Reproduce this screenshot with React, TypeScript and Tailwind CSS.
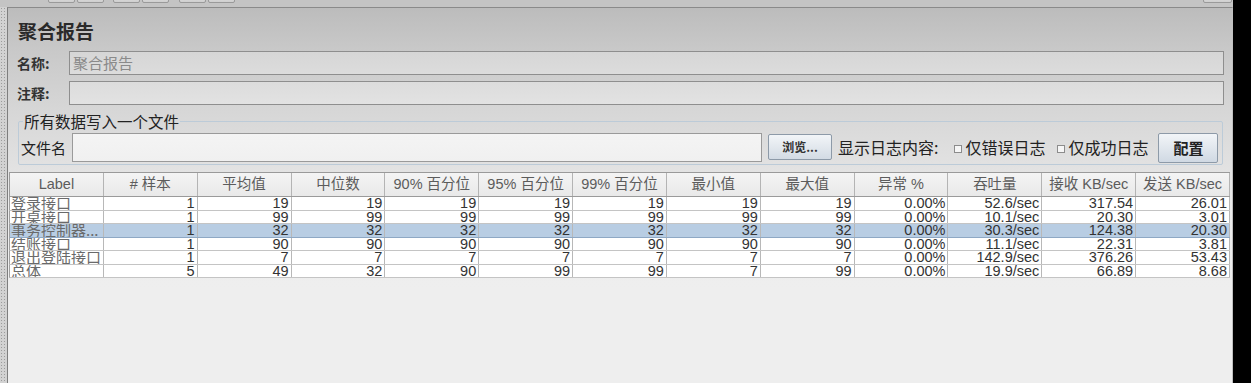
import React from "react";

const cols = [
  "Label",
  "# 样本",
  "平均值",
  "中位数",
  "90% 百分位",
  "95% 百分位",
  "99% 百分位",
  "最小值",
  "最大值",
  "异常 %",
  "吞吐量",
  "接收 KB/sec",
  "发送 KB/sec",
];

const rows: string[][] = [
  ["登录接口", "1", "19", "19", "19", "19", "19", "19", "19", "0.00%", "52.6/sec", "317.54", "26.01"],
  ["开桌接口", "1", "99", "99", "99", "99", "99", "99", "99", "0.00%", "10.1/sec", "20.30", "3.01"],
  ["事务控制器...", "1", "32", "32", "32", "32", "32", "32", "32", "0.00%", "30.3/sec", "124.38", "20.30"],
  ["结账接口", "1", "90", "90", "90", "90", "90", "90", "90", "0.00%", "11.1/sec", "22.31", "3.81"],
  ["退出登陆接口", "1", "7", "7", "7", "7", "7", "7", "7", "0.00%", "142.9/sec", "376.26", "53.43"],
  ["总体", "5", "49", "32", "90", "99", "99", "7", "99", "0.00%", "19.9/sec", "66.89", "8.68"],
];

const cjk = "font-['Noto_Sans_CJK_SC','Noto_Sans',sans-serif]";
const mixed = "font-['Liberation_Sans','Noto_Sans_CJK_SC',sans-serif]";

function ToolBtn({ w }: { w: string }) {
  return (
    <div
      className={`${w} h-[10px] -mt-[7px] rounded-[2px] border border-[#9a9a9a] bg-[linear-gradient(180deg,#e4e4e4,#cfcfcf)]`}
    />
  );
}

function Check() {
  return <span className="inline-block w-[8px] h-[8px] border border-[#8c8c8c] bg-[#f6f6f6]" />;
}

export default function App() {
  return (
    <div className="w-[1251px] h-[383px] bg-black flex overflow-hidden">
      <div className="w-[1233px] h-full flex flex-col">
        {/* top toolbar strip */}
        <div className="h-[7px] bg-[#c4c4c4] flex items-start overflow-hidden">
          <div className="ml-[48px] flex gap-[2px]">
            <ToolBtn w="w-[27px]" />
            <ToolBtn w="w-[27px]" />
          </div>
          <div className="ml-[9px] flex gap-[2px]">
            <ToolBtn w="w-[27px]" />
            <ToolBtn w="w-[27px]" />
          </div>
          <div className="ml-[10px] flex gap-[2px]">
            <ToolBtn w="w-[27px]" />
            <ToolBtn w="w-[27px]" />
          </div>
          <div className="ml-auto mr-[1px]">
            <ToolBtn w="w-[29px]" />
          </div>
        </div>
        <div className="flex-1 flex min-h-0">
          {/* dotted splitter */}
          <div className="w-[7px] h-full bg-[#d2d2d2] bg-[radial-gradient(circle,#9c9c9c_0.7px,transparent_0.9px)] bg-[length:3px_3px]" />
          {/* main panel */}
          <div className="flex-1 h-full flex flex-col border-l border-t border-r border-l-[#7e7e7e] border-t-[#8a8a8a] border-r-[#c0c0c0] bg-[linear-gradient(180deg,#bcbcbc_0px,#c8c8c8_40px,#d6d6d6_100px,#e2e2e2_160px,#ebebeb_200px,#eeeeee_280px)]">
            {/* title */}
            <div className={`mt-[10px] ml-[10px] h-[26px] leading-[26px] text-[19px] font-bold text-[#2a2a2a] ${cjk}`}>
              聚合报告
            </div>
            {/* name row */}
            <div className="mt-[7px] h-[24px] flex items-center pl-[9px] pr-[8px]">
              <div className={`w-[52px] text-[14px] font-bold text-[#333] ${cjk}`}>名称:</div>
              <div className={`flex-1 h-full border border-[#8e8e8e] bg-[linear-gradient(180deg,#d6d6d6,#dcdcdc)] pl-[3px] text-[15px] leading-[22px] text-[#8a8a8a] ${cjk}`}>
                聚合报告
              </div>
            </div>
            {/* comment row */}
            <div className="mt-[6px] h-[24px] flex items-center pl-[9px] pr-[8px]">
              <div className={`w-[52px] text-[14px] font-bold text-[#333] ${cjk}`}>注释:</div>
              <div className="flex-1 h-full border border-[#8e8e8e] bg-[linear-gradient(180deg,#dcdcdc,#e2e2e2)]" />
            </div>
            {/* file group */}
            <fieldset className="mt-[6px] ml-[10px] mr-[9px] border border-[#bccbd8] rounded-[2px] pb-[1px]">
              <legend className={`ml-[4px] px-[1px] text-[15.5px] leading-[20px] text-[#222] ${cjk}`}>
                所有数据写入一个文件
              </legend>
              <div className="mt-[2px] h-[30px] flex items-start pl-[2px]">
                <div className={`w-[51px] h-[29px] leading-[29px] text-[15px] text-[#222] ${cjk}`}>文件名</div>
                <div className="w-[690px] h-[29px] border border-[#9a9a9a] bg-[linear-gradient(180deg,#f4f4f4,#f0f0f0)]" />
                <div
                  className={`ml-[6px] mt-[1px] w-[64px] h-[26px] rounded-[2px] border border-[#8d9aa8] bg-[linear-gradient(180deg,#f2f5f8,#d3dbe4)] flex items-center justify-center text-[12px] font-bold text-[#333] ${cjk}`}
                >
                  浏览...
                </div>
                <div className={`ml-[6px] h-[29px] leading-[29px] text-[16px] text-[#222] ${cjk}`}>显示日志内容:</div>
                <div className="ml-[16px] mt-[12px] flex">
                  <Check />
                </div>
                <div className={`ml-[3px] h-[29px] leading-[29px] text-[16px] text-[#222] ${cjk}`}>仅错误日志</div>
                <div className="ml-[12px] mt-[12px] flex">
                  <Check />
                </div>
                <div className={`ml-[3px] h-[29px] leading-[29px] text-[16px] text-[#222] ${cjk}`}>仅成功日志</div>
                <div
                  className={`ml-[10px] w-[60px] h-[30px] rounded-[2px] border border-[#8d9aa8] bg-[linear-gradient(180deg,#f2f5f8,#d0d9e3)] flex items-center justify-center text-[15px] font-bold text-[#222] ${cjk}`}
                >
                  配置
                </div>
              </div>
            </fieldset>
            {/* table */}
            <div className="mt-[7px] ml-[1px] w-[1221px]">
              <div className="grid grid-cols-[repeat(13,minmax(0,1fr))] h-[25px] border-t border-b border-l border-[#9a9a9a] bg-[linear-gradient(180deg,#f4f4f4,#e9e9e9)]">
                {cols.map((c, i) => (
                  <div
                    key={i}
                    className={`border-r border-[#b4b4b4] flex items-center justify-center text-[14.5px] text-[#5c5c5c] whitespace-nowrap overflow-hidden ${mixed}`}
                  >
                    {c}
                  </div>
                ))}
              </div>
              {rows.map((r, ri) => {
                const sel = ri === 2;
                return (
                  <div
                    key={ri}
                    className={`grid grid-cols-[repeat(13,minmax(0,1fr))] h-[13.5px] border-b border-l ${
                      sel ? "bg-[#b8cde3] border-b-[#8ea8c4] border-l-[#a0a0a0]" : "bg-white border-b-[#c4c4c4] border-l-[#a0a0a0]"
                    }`}
                  >
                    {r.map((v, ci) => (
                      <div
                        key={ci}
                        className={`border-r border-[#b8b8b8] overflow-hidden whitespace-nowrap leading-[12px] ${
                          ci === 0
                            ? `pl-[1px] text-left text-[15px] text-[#6a6a6a] ${cjk}`
                            : `pr-[2px] text-right text-[14.5px] text-[#333] font-['Liberation_Sans',sans-serif]`
                        }`}
                      >
                        {v}
                      </div>
                    ))}
                  </div>
                );
              })}
            </div>
            <div className="flex-1" />
          </div>
        </div>
      </div>
    </div>
  );
}
